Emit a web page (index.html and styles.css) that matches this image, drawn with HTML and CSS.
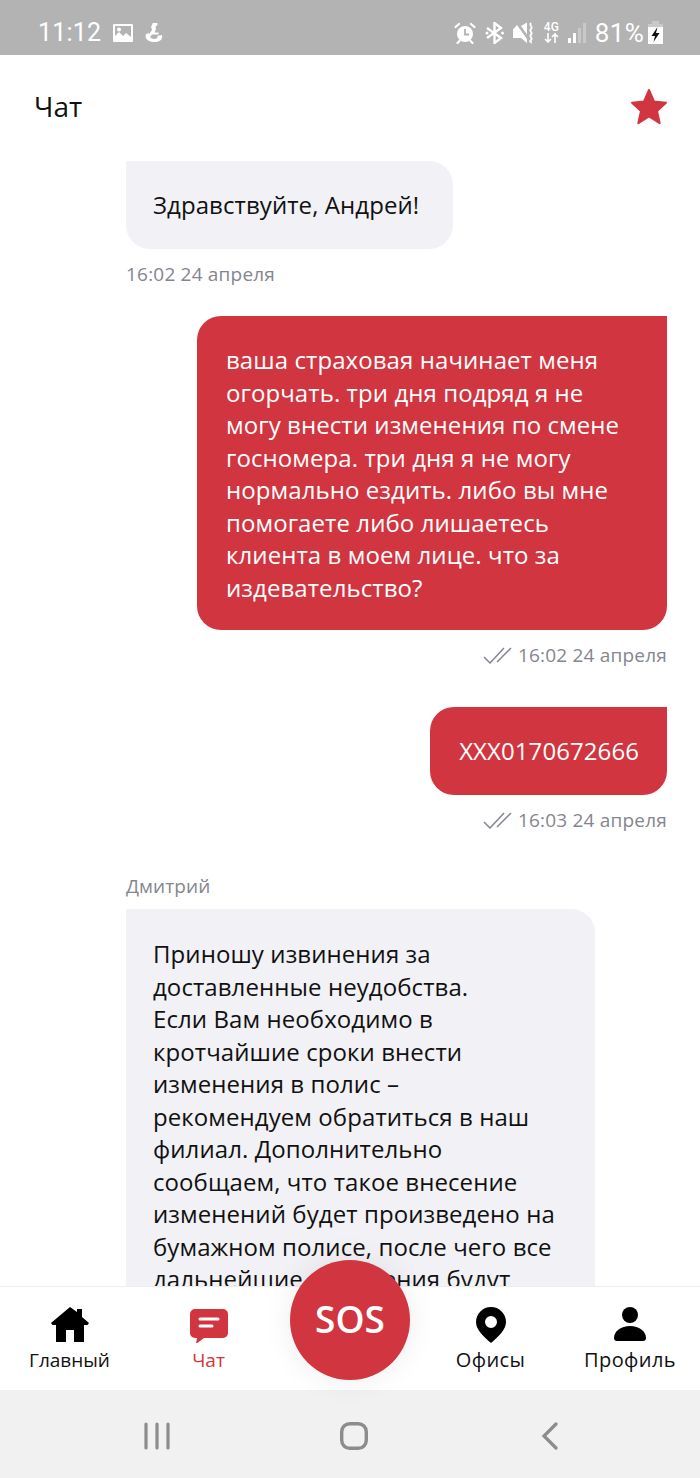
FILE: index.html
```html
<!DOCTYPE html>
<html lang="ru">
<head>
    <meta charset="UTF-8">
    <meta name="viewport" content="width=device-width, initial-scale=1.0">
    <title>Чат</title>
    <link rel="stylesheet" href="styles.css">
</head>
<body>

<div class="status-bar">
    <div class="status-left">
        <span class="status-time">11:12</span>
        <svg class="status-icon" width="20" height="20" viewBox="0 0 20 20"><path fill-rule="evenodd" fill="#fff" d="M1 1h18a1 1 0 0 1 1 1v16a1 1 0 0 1-1 1H1a1 1 0 0 1-1-1V2a1 1 0 0 1 1-1zM2 3v10l4-4 4 4 3-3 5 4V3zM6 4.500a2 2 0 1 1 0 4a2 2 0 0 1 0-4z"/></svg>
        <svg class="status-icon" width="18" height="20" viewBox="0 0 18 20"><path fill="#fff" d="M7.500 1a2.500 2.500 0 1 1 3 2.600L11 6l-1.500 3.500h4v2H7L5 14c1 2 6 3 8 0l-1-1 5-1c1 4-2 7-7 7-6 0-11-3-9-8l3-1-.5 2 3.500-5-.5-2a2.600 2.600 0 0 1-.500-1z"/></svg>
    </div>
    <div class="status-right">
        <svg width="22" height="22" viewBox="0 0 22 22"><circle cx="11" cy="12" r="8" fill="#fff"/><path d="M11 7v5.500h4" fill="none" stroke="#b3b3b3" stroke-width="1.800"/><path d="M1.500 5L5 2M20.500 5L17 2M5.500 19l-2 2M16.500 19l2 2" stroke="#fff" stroke-width="2.200" stroke-linecap="round"/></svg>
        <svg width="19" height="22" viewBox="0 0 19 22"><path d="M2 6l14 10-6.500 5V1L16 6 2 16" fill="none" stroke="#fff" stroke-width="2.400"/><circle cx="2" cy="11" r="1.500" fill="#fff"/><circle cx="17.500" cy="11" r="1.500" fill="#fff"/></svg>
        <svg width="22" height="22" viewBox="0 0 22 22"><path d="M0 7.500L4 3l10 14v4l-6-5H0z" fill="#fff"/><path d="M8 4l6-3.500v12z" fill="#fff"/><path d="M18 1c-2.500 2.500 2.500 3.500 0 6s2.500 3.500 0 5.500 2.500 3.500 0 5.500 1 2 0 3" fill="none" stroke="#fff" stroke-width="1.800"/></svg>
        <div class="net-type">
            <span>4G</span>
            <svg width="15" height="10" viewBox="0 0 15 10"><path d="M4 0v9M1 6l3 3 3-3M11 10V1M8 4l3-3 3 3" fill="none" stroke="#fff" stroke-width="1.600"/></svg>
        </div>
        <svg width="18" height="20" viewBox="0 0 18 20"><rect x="0" y="15" width="3" height="5" fill="#fff"/><rect x="5" y="10" width="3" height="10" fill="#fff"/><rect x="10" y="5" width="3" height="15" fill="#c9c9c9"/><rect x="15" y="0" width="3" height="20" fill="#c9c9c9"/></svg>
        <span class="status-percent">81%</span>
        <svg width="15" height="23" viewBox="0 0 15 23"><rect x="4" y="0" width="7" height="3" fill="#c9c9c9"/><rect x="0" y="3" width="15" height="4" fill="#c9c9c9"/><rect x="0" y="6" width="15" height="17" fill="#fff"/><path d="M9.500 6L3.500 15h3.500l-1.500 6 6-9H8z" fill="#111"/></svg>
    </div>
</div>

<div class="header">
    <h1 class="header-title">Чат</h1>
    <svg class="header-star" width="40" height="40" viewBox="0 0 40 40"><path fill="#d13540" stroke="#d13540" stroke-width="2" stroke-linejoin="round" d="M20 3l5 11.500 12 1.200-9 8.300 2.700 12.200L20 29.500 9.300 36.200 12 24l-9-8.300 12-1.200z"/></svg>
</div>

<div class="chat">
    <div class="msg msg-in">
        <div class="bubble">Здравствуйте, Андрей!</div>
        <div class="msg-time">16:02 24 апреля</div>
    </div>

    <div class="msg msg-out">
        <div class="bubble bubble-wide">ваша страховая начинает меня огорчать. три дня подряд я не могу внести изменения по смене госномера. три дня я не могу нормально ездить. либо вы мне помогаете либо лишаетесь клиента в моем лице. что за издевательство?</div>
        <div class="msg-time">
            <svg width="29" height="17" viewBox="0 0 29 17"><path d="M1 10l6 6L21 1M14 15L28 1" fill="none" stroke="#85858f" stroke-width="1.500"/></svg>
            16:02 24 апреля
        </div>
    </div>

    <div class="msg msg-out">
        <div class="bubble">XXX0170672666</div>
        <div class="msg-time">
            <svg width="29" height="17" viewBox="0 0 29 17"><path d="M1 10l6 6L21 1M14 15L28 1" fill="none" stroke="#85858f" stroke-width="1.500"/></svg>
            16:03 24 апреля
        </div>
    </div>

    <div class="msg msg-in">
        <div class="msg-author">Дмитрий</div>
        <div class="bubble bubble-long">Приношу извинения за доставленные неудобства.<br>Если Вам необходимо в кротчайшие сроки внести изменения в полис – рекомендуем обратиться в наш филиал. Дополнительно сообщаем, что такое внесение изменений будет произведено на бумажном полисе, после чего все дальнейшие изменения будут</div>
    </div>
</div>

<div class="tabbar">
    <a class="tab">
        <svg width="38" height="36" viewBox="0 0 38 36"><path d="M19 0L26 5V2h5v8l7 6-1.500 2H33v17H23V23h-8v12H5V18H1.500L0 16z"/></svg>
        <span>Главный</span>
    </a>
    <a class="tab tab-active">
        <svg class="tab-chat-icon" width="38" height="34" viewBox="0 0 38 34"><path fill="#d13540" d="M5 0h28a5 5 0 0 1 5 5v19a5 5 0 0 1-5 5H14l-8 6 1-6H5a5 5 0 0 1-5-5V5a5 5 0 0 1 5-5z"/><path d="M10 10h18M10 17h12" stroke="#fff" stroke-width="3" stroke-linecap="round"/></svg>
        <span>Чат</span>
    </a>
    <div class="tab-gap"></div>
    <a class="tab tab-wide">
        <svg width="30" height="36" viewBox="0 0 30 36"><path fill-rule="evenodd" d="M15 0a15 15 0 0 1 15 15c0 8-8 15-15 21C8 30 0 23 0 15A15 15 0 0 1 15 0zM15 9a6 6 0 1 0 0 12 6 6 0 0 0 0-12z"/></svg>
        <span>Офисы</span>
    </a>
    <a class="tab tab-wide tab-last">
        <svg width="32" height="36" viewBox="0 0 32 36"><circle cx="16" cy="8" r="8"/><path d="M3 34a3 3 0 0 1-3-3c0-7 7-12 16-12s16 5 16 12a3 3 0 0 1-3 3z"/></svg>
        <span>Профиль</span>
    </a>
    <div class="sos">SOS</div>
</div>

<div class="nav-bar">
    <svg width="28" height="28" viewBox="0 0 28 28"><path d="M3 2v24M14 2v24M25 2v24" stroke="#8c8c8c" stroke-width="3.200" stroke-linecap="round"/></svg>
    <svg class="nav-home" width="28" height="28" viewBox="0 0 28 28"><rect x="1.700" y="1.700" width="24.600" height="24.600" rx="8" fill="none" stroke="#8c8c8c" stroke-width="3.400"/></svg>
    <svg width="18" height="28" viewBox="0 0 18 28"><path d="M15 2L3 14l12 12" fill="none" stroke="#8c8c8c" stroke-width="3.200" stroke-linecap="round"/></svg>
</div>

</body>
</html>
```

FILE: styles.css
```css
* {
    box-sizing: border-box;
}
html, body {
    height: 100%;
}
body {
    font-family: "Open Sans", "Noto Sans", sans-serif;
    margin: 0;
    display: flex;
    flex-direction: column;
    overflow: hidden;
    background-color: #fff;
    color: #111;
}
.status-bar {
    height: 55px;
    flex: none;
    background-color: #b3b3b3;
    color: #fff;
    display: flex;
    justify-content: space-between;
    align-items: center;
    padding: 14px 37px 4px 38px;
    font-family: Roboto, sans-serif;
}
.status-left, .status-right {
    display: flex;
    align-items: center;
}
.status-left {
    gap: 12px;
}
.status-right {
    gap: 9px;
}
.status-time {
    font-size: 25px;
    letter-spacing: 0.2px;
}
.status-percent {
    font-size: 26px;
    letter-spacing: 0.3px;
    margin-right: -5px;
}
.net-type {
    display: flex;
    flex-direction: column;
    align-items: center;
    font-size: 12px;
    line-height: 11px;
    font-weight: 500;
}
.header {
    height: 106px;
    flex: none;
    display: flex;
    justify-content: space-between;
    align-items: flex-start;
    padding: 32px 31px 0 34px;
}
.header-title {
    margin: 0;
    font-size: 28px;
    line-height: 38px;
    font-weight: 400;
}
.chat {
    flex: 1;
    min-height: 0;
    overflow: hidden;
    display: flex;
    flex-direction: column;
    padding: 0 33px 0 126px;
    font-size: 24px;
    line-height: 32.500px;
    letter-spacing: 0.08px;
}
.msg {
    display: flex;
    flex-direction: column;
    flex: none;
}
.msg-in {
    align-items: flex-start;
}
.msg-out {
    align-items: flex-end;
}
.bubble {
    padding: 28px 34px 27.500px 27px;
    border-radius: 24px;
    background-color: #f1f1f6;
    border-top-left-radius: 0;
}
.msg-out .bubble {
    padding-left: 29px;
    padding-right: 28px;
    background-color: #d13540;
    color: #fff;
    border-top-left-radius: 24px;
    border-top-right-radius: 0;
}
.msg-out .bubble-wide {
    width: 470px;
    padding-bottom: 26px;
}
.bubble-long {
    width: 469px;
    padding-top: 29px;
    padding-right: 38px;
    border-bottom-left-radius: 0;
    border-bottom-right-radius: 0;
}
.msg-time {
    display: flex;
    align-items: center;
    gap: 6px;
    margin-top: 12px;
    font-size: 19px;
    line-height: 26px;
    letter-spacing: 0.2px;
    color: #85858f;
}
.msg-in .msg-time {
    margin-bottom: 29px;
}
.msg-out .msg-time {
    margin-bottom: 39px;
}
.msg-author {
    font-size: 19px;
    line-height: 26px;
    margin-top: 1px;
    margin-bottom: 10px;
    color: #85858f;
}
.tabbar {
    position: relative;
    height: 104px;
    flex: none;
    display: flex;
    background-color: #fff;
    border-top: 1px solid #eee;
    padding: 20px 0 0;
}
.tab {
    display: flex;
    flex-direction: column;
    align-items: center;
    width: 139px;
    font-size: 19px;
    line-height: 26px;
    color: #111;
}
.tab svg {
    margin-bottom: 4px;
}
.tab .tab-chat-icon {
    margin-top: 2px;
    margin-bottom: 4px;
}
.tab-active {
    color: #d13540;
}
.tab-wide {
    font-size: 20px;
    letter-spacing: 0.4px;
}
.tab-last {
    width: 140px;
}
.tab-gap {
    width: 143px;
}
.sos {
    position: absolute;
    left: 290px;
    top: -27px;
    width: 120px;
    height: 120px;
    padding-bottom: 4px;
    border-radius: 50%;
    background-color: #d13540;
    color: #fff;
    font-size: 37px;
    font-weight: 600;
    display: flex;
    align-items: center;
    justify-content: center;
    box-shadow: 0 0 30px rgba(0, 0, 0, 0.08);
}
.nav-bar {
    height: 88px;
    flex: none;
    background-color: #f1f1f1;
    display: flex;
    justify-content: space-between;
    align-items: center;
    padding: 4px 141px 0 143px;
}
.nav-home {
    margin-right: 5px;
}
```
